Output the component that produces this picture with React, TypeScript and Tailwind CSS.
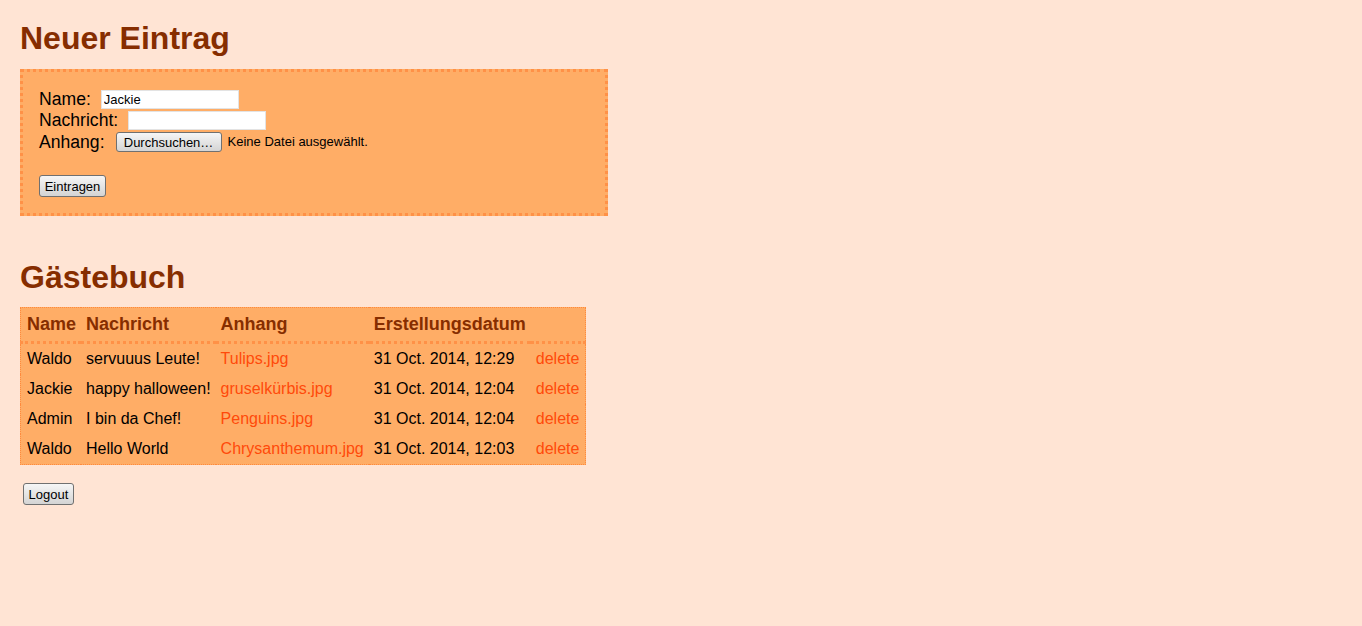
const entries = [
  { name: "Waldo", msg: "servuuus Leute!", file: "Tulips.jpg", date: "31 Oct. 2014, 12:29" },
  { name: "Jackie", msg: "happy halloween!", file: "gruselkürbis.jpg", date: "31 Oct. 2014, 12:04" },
  { name: "Admin", msg: "I bin da Chef!", file: "Penguins.jpg", date: "31 Oct. 2014, 12:04" },
  { name: "Waldo", msg: "Hello World", file: "Chrysanthemum.jpg", date: "31 Oct. 2014, 12:03" },
];

const btn =
  "rounded-[3px] border border-[#707070] bg-gradient-to-b from-[#f6f6f6] to-[#d4d4d4] text-[13px] leading-none text-black";

export default function App() {
  return (
    <div className="min-h-screen bg-[#ffe4d4] px-5 pt-5 font-['Liberation_Sans',Arial,sans-serif] text-black">
      {/* Formular */}
      <h1 className="mb-3 text-[32px] font-bold leading-[37px] text-[#862d00]">Neuer Eintrag</h1>
      <div className="w-[588px] border-[3px] border-dotted border-[#ff9147] bg-[#ffad66] p-4 text-[17.6px] leading-[20px]">
        <div className="flex h-[21px] items-center">
          <span>Name:</span>
          <input
            defaultValue="Jackie"
            className="ml-[10px] mt-[2px] h-[19px] w-[138px] border border-[#e3e3e3] bg-white px-[2px] text-[13px] outline-none"
          />
        </div>
        <div className="flex h-[21px] items-center">
          <span>Nachricht:</span>
          <input className="ml-[10px] mt-[2px] h-[19px] w-[138px] border border-[#e3e3e3] bg-white px-[2px] text-[13px] outline-none" />
        </div>
        <div className="flex h-[23px] items-center">
          <span>Anhang:</span>
          <button className={`${btn} ml-[11px] mt-[1px] h-[20px] w-[106px]`}>Durchsuchen…</button>
          <span className="ml-[6px] text-[13px]">Keine Datei ausgewählt.</span>
        </div>
        <button className={`${btn} mt-[22px] block h-[22px] w-[67px]`}>Eintragen</button>
      </div>

      {/* Einträge */}
      <h1 className="mt-[43px] mb-[11px] text-[32px] font-bold leading-[37px] text-[#862d00]">Gästebuch</h1>
      <table className="border-collapse border border-dotted border-[#ff8a3d] bg-[#ffad66]">
        <thead>
          <tr className="text-left text-[18px] leading-[21px] text-[#862d00]">
            {["Name", "Nachricht", "Anhang", "Erstellungsdatum", ""].map((h, i) => (
              <th
                key={i}
                className="border-b-[3px] border-dotted border-[#ff9147] py-[6px] pl-[5px] pr-[5px] font-bold first:pl-[6px]"
              >
                {h}
              </th>
            ))}
          </tr>
        </thead>
        <tbody className="text-[16px] leading-[18px]">
          {entries.map((e, i) => (
            <tr key={i}>
              <td className="py-[6px] pl-[6px] pr-[5px]">{e.name}</td>
              <td className="px-[5px] py-[6px]">{e.msg}</td>
              <td className="px-[5px] py-[6px]">
                <a href="#" className="text-[#ff4a0a]">{e.file}</a>
              </td>
              <td className="px-[5px] py-[6px]">{e.date}</td>
              <td className="px-[5px] py-[6px] pr-[6px]">
                <a href="#" className="text-[#ff4a0a]">delete</a>
              </td>
            </tr>
          ))}
        </tbody>
      </table>
      <button className={`${btn} mt-[18px] ml-[3px] h-[22px] w-[51px]`}>Logout</button>
    </div>
  );
}
